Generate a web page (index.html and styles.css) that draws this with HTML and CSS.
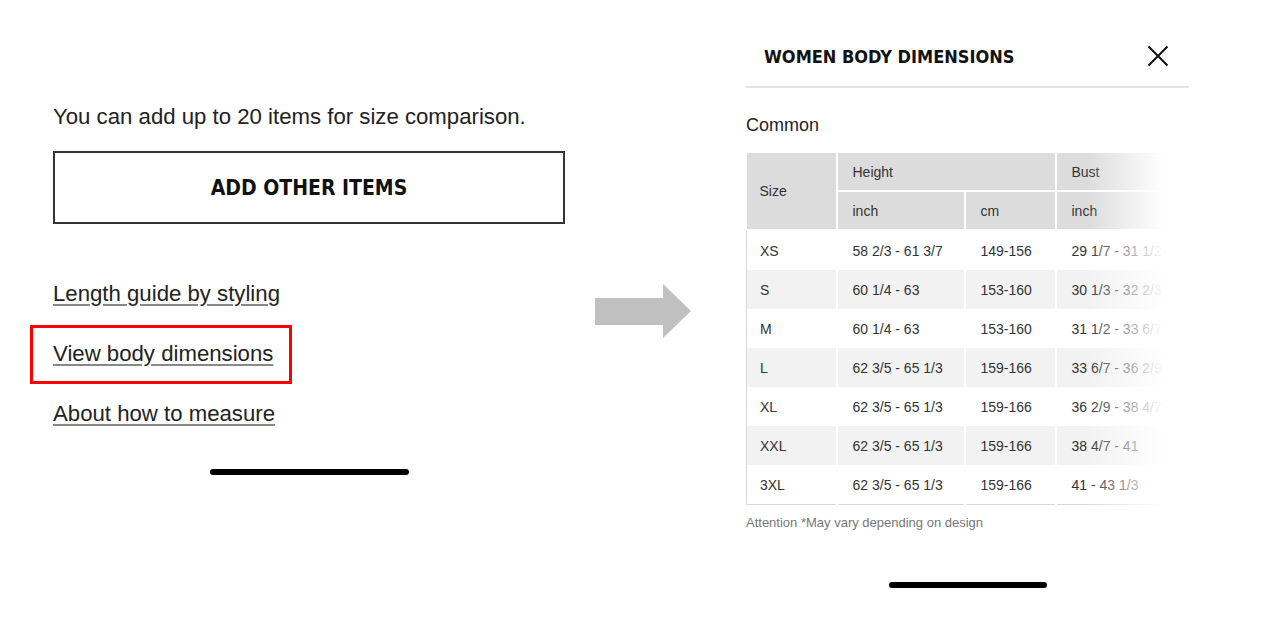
FILE: index.html
```html
<!DOCTYPE html>
<html lang="en">
<head>
    <meta charset="UTF-8">
    <title>Body dimensions</title>
    <link rel="stylesheet" href="styles.css">
</head>
<body>
<div class="page">
    <div class="left">
        <p class="intro">You can add up to 20 items for size comparison.</p>
        <div class="add-btn">ADD OTHER ITEMS</div>
        <div class="links">
            <div class="link-row"><a href="#">Length guide by styling</a></div>
            <div class="link-row"><a href="#" class="highlight">View body dimensions</a></div>
            <div class="link-row"><a href="#">About how to measure</a></div>
        </div>
        <div class="home-bar"></div>
    </div>

    <div class="arrow">
        <svg width="96" height="56" viewBox="0 0 96 56">
            <polygon points="0,14 68,14 68,0 96,27 68,54 68,41 0,41" fill="#c0c0c0"/>
        </svg>
    </div>

    <div class="right">
        <div class="sheet-head">
            <h2>WOMEN BODY DIMENSIONS</h2>
            <svg class="close" width="22" height="22" viewBox="0 0 22 22">
                <path d="M1.5 1.5 L20.5 20.5 M20.5 1.5 L1.5 20.5" stroke="#111" stroke-width="2" fill="none"/>
            </svg>
        </div>
        <div class="section">Common</div>
        <div class="table-wrap">
            <table class="dims">
                <colgroup>
                    <col style="width:90px">
                    <col style="width:128px">
                    <col style="width:91px">
                    <col style="width:128px">
                </colgroup>
                <thead>
                    <tr>
                        <th rowspan="2" class="size-col">Size</th>
                        <th colspan="2">Height</th>
                        <th>Bust</th>
                    </tr>
                    <tr>
                        <th>inch</th><th>cm</th><th>inch</th>
                    </tr>
                </thead>
                <tbody id="rows"></tbody>
            </table>
        </div>
        <p class="note">Attention *May vary depending on design</p>
        <div class="home-bar small"></div>
    </div>
</div>

<script>
    var rows = [
        ["XS", "58 2/3 - 61 3/7", "149-156", "29 1/7 - 31 1/2"],
        ["S", "60 1/4 - 63", "153-160", "30 1/3 - 32 2/3"],
        ["M", "60 1/4 - 63", "153-160", "31 1/2 - 33 6/7"],
        ["L", "62 3/5 - 65 1/3", "159-166", "33 6/7 - 36 2/9"],
        ["XL", "62 3/5 - 65 1/3", "159-166", "36 2/9 - 38 4/7"],
        ["XXL", "62 3/5 - 65 1/3", "159-166", "38 4/7 - 41"],
        ["3XL", "62 3/5 - 65 1/3", "159-166", "41 - 43 1/3"]
    ];
    var body = document.querySelector('#rows');
    rows.forEach(function (r) {
        var tr = document.createElement('tr');
        r.forEach(function (v, i) {
            var td = document.createElement('td');
            if (i === 0) td.className = 'size-col';
            td.textContent = v;
            tr.appendChild(td);
        });
        body.appendChild(tr);
    });
</script>
</body>
</html>
```

FILE: styles.css
```css
html {
    font-family: "Liberation Sans", Arial, sans-serif;
}
body {
    margin: 0;
    background: #fff;
    color: #1a1a1a;
}
.page {
    display: flex;
    height: 632px;
}
.left {
    width: 512px;
    margin-left: 53px;
    padding-top: 105px;
    display: flex;
    flex-direction: column;
}
.intro {
    margin: 0;
    font-size: 22.2px;
    line-height: 24px;
    color: #222;
}
.add-btn {
    margin-top: 22px;
    height: 73px;
    box-sizing: border-box;
    border: 2px solid #333;
    display: flex;
    align-items: center;
    justify-content: center;
    font-family: "DejaVu Sans Condensed", "DejaVu Sans", sans-serif;
    font-weight: bold;
    font-size: 21px;
    color: #111;
}
.links {
    margin-top: 40px;
}
.link-row {
    height: 60px;
    display: flex;
    align-items: center;
}
.link-row a {
    font-size: 22.2px;
    line-height: 24px;
    color: #222;
    text-decoration: underline;
    text-decoration-color: #888;
    text-underline-offset: 3px;
}
.link-row a.highlight {
    border: 3px solid #f00;
    margin-left: -23px;
    padding: 14px 16px 15px 20px;
}
.home-bar {
    align-self: center;
    width: 199px;
    height: 6px;
    border-radius: 3px;
    background: #000;
    margin-top: 25px;
}
.arrow {
    width: 181px;
    padding-top: 284px;
    padding-left: 30px;
    box-sizing: border-box;
}
.arrow svg {
    display: block;
}
.right {
    width: 443px;
    padding-top: 26px;
    display: flex;
    flex-direction: column;
}
.sheet-head {
    height: 60px;
    display: flex;
    align-items: center;
    justify-content: space-between;
    border-bottom: 2px solid #e3e3e3;
    padding: 0 20px 0 18px;
}
.sheet-head h2 {
    margin: 0;
    font-family: "DejaVu Sans Condensed", "DejaVu Sans", sans-serif;
    font-weight: bold;
    font-size: 18px;
    color: #111;
}
.section {
    margin-top: 26px;
    font-size: 18px;
    line-height: 22px;
    color: #222;
}
.table-wrap {
    margin-top: 17px;
    width: 437px;
    position: relative;
}
.table-wrap::after {
    content: "";
    position: absolute;
    top: -2px;
    left: 340px;
    right: -8px;
    bottom: -2px;
    background: linear-gradient(to right, rgba(255,255,255,0), #fff 74%);
}
.dims {
    border-collapse: collapse;
    table-layout: fixed;
    width: 437px;
    font-size: 14px;
    color: #333;
}
.dims th {
    background: #dcdcdc;
    font-weight: normal;
    text-align: left;
    height: 37px;
    padding: 0 0 0 15px;
    border: 2px solid #fff;
    border-top: 0;
    border-right: 0;
}
.dims th.size-col {
    padding-left: 13px;
    border-left: 0;
}
.dims td {
    height: 39px;
    padding: 0 0 0 15px;
    border-left: 2px solid #fff;
    white-space: nowrap;
}
.dims tbody tr:nth-child(even) td {
    background: #f2f2f2;
}
.dims td.size-col {
    border-left: 1px solid #d8d8d8;
    border-right: 1px solid #d8d8d8;
    padding-left: 13px;
}
.dims tbody tr:last-child td {
    border-bottom: 1px solid #d8d8d8;
}
.note {
    margin: 10px 0 0;
    font-size: 13px;
    line-height: 16px;
    color: #777;
}
.home-bar.small {
    width: 158px;
    margin-top: 51px;
}
```
